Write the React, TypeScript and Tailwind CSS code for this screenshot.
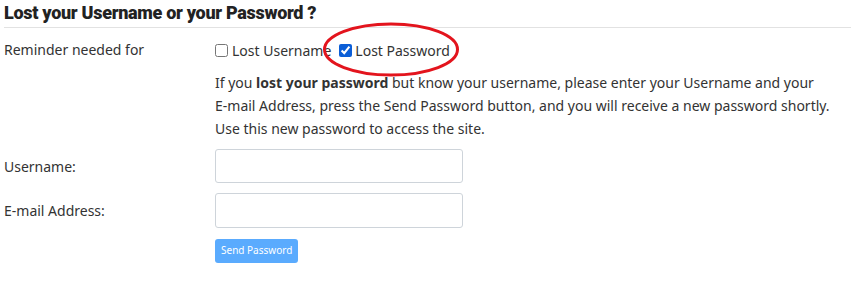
const font = { fontFamily: '"Segoe UI", "Noto Sans", "Open Sans", sans-serif' };

const App = () => {
  return (
    <div className="w-[855px] h-[285px] bg-white text-[#333] text-[14px]" style={font}>
      <div className="px-[4px] pt-[3px]">
        <h2
          className="text-[18px] font-black text-[#222] tracking-[-0.3px] leading-[20px] pb-[4px] border-b border-[#e2e2e2] w-[847px]"
          style={{ fontFamily: '"Roboto", "Lato", sans-serif' }}
        >
          Lost your Username or your Password ?
        </h2>
      </div>

      <div className="grid grid-cols-[211px_1fr] pl-[4px] pt-[11px]">
        <div className="leading-[22px]">Reminder needed for</div>
        <div className="relative flex items-center h-[22px]">
          <label className="flex items-center gap-[4px]">
            <input type="checkbox" className="w-[13px] h-[13px] accent-[#0b5ed7]" />
            <span>Lost Username</span>
          </label>
          <label className="flex items-center gap-[3px] ml-[8px]">
            <input type="checkbox" defaultChecked className="w-[13px] h-[13px] accent-[#0b5ed7]" />
            <span>Lost Password</span>
          </label>
          <svg
            className="absolute left-[107px] top-[-18px] pointer-events-none"
            width="140"
            height="58"
            viewBox="0 0 140 58"
          >
            <ellipse cx="69" cy="28.5" rx="66.5" ry="25.5" fill="none" stroke="#e3141d" strokeWidth="3" />
          </svg>
        </div>

        <div />
        <p className="leading-[23px] pt-[10px] pb-[9px] whitespace-nowrap">
          If you <b>lost your password</b> but know your username, please enter your Username and your
          <br />
          E-mail Address, press the Send Password button, and you will receive a new password shortly.
          <br />
          Use this new password to access the site.
        </p>

        <div className="flex items-center h-[34px]">Username:</div>
        <input type="text" className="w-[248px] h-[34px] border border-[#ced4da] rounded-[3px]" />

        <div className="flex items-center h-[34px] mt-[10px]">E-mail Address:</div>
        <input type="text" className="w-[248px] h-[35px] mt-[10px] border border-[#ced4da] rounded-[3px]" />

        <div />
        <div className="mt-[10px]">
          <button className="h-[24px] px-[6px] rounded-[3px] bg-[#5aabfe] text-white text-[10px]">
            Send Password
          </button>
        </div>
      </div>
    </div>
  );
};

export default App;
